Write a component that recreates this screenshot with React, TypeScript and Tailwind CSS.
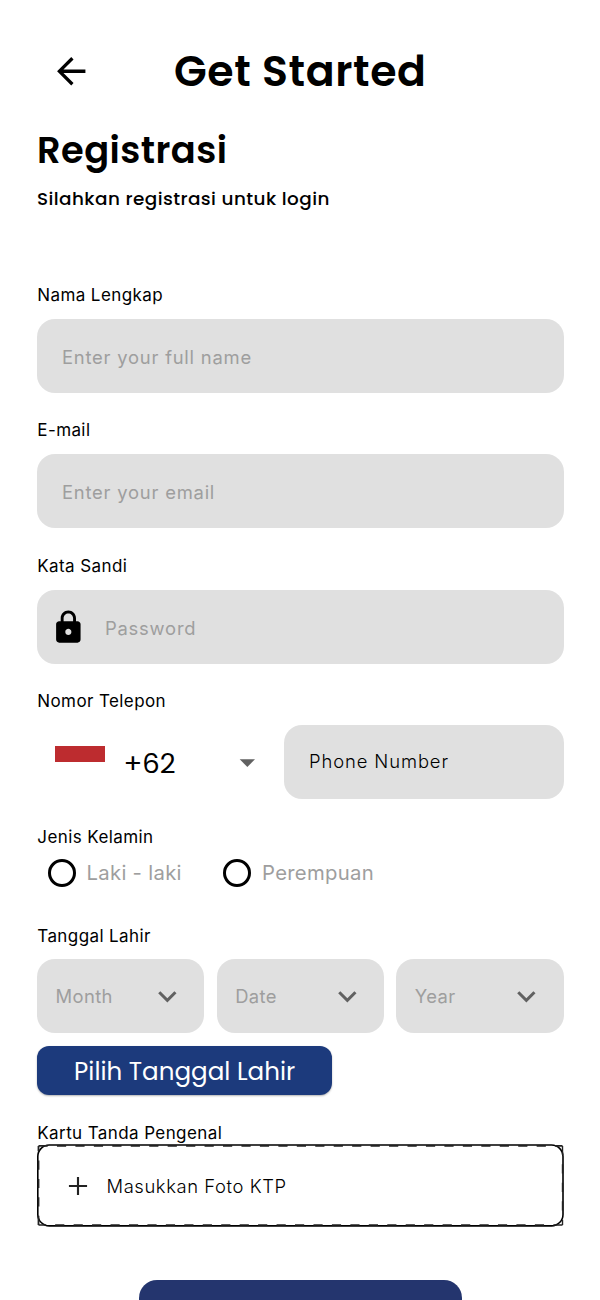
import type { ReactNode } from "react";

const chevron = "M7.41 8.59 12 13.17l4.59-4.58L18 10l-6 6-6-6 1.41-1.41z";

function Icon({ d, className }: { d: string; className: string }) {
  return (
    <svg viewBox="0 0 24 24" fill="currentColor" fillRule="evenodd" className={className}>
      <path d={d} />
    </svg>
  );
}

function Label({ children, className = "" }: { children: ReactNode; className?: string }) {
  return (
    <div className={`h-[25px] whitespace-nowrap pl-[0.3px] pt-[1.3px] text-[17px] leading-[25px] tracking-[0.4px] text-black ${className}`}>
      {children}
    </div>
  );
}

function Field({ label, children }: { label: string; children: ReactNode }) {
  return (
    <div className="mb-[24px]">
      <Label className="mb-[12.5px]">{label}</Label>
      <div className="flex h-[74px] items-center rounded-[18px] bg-[#e0e0e0]">{children}</div>
    </div>
  );
}

function Placeholder({ children, className = "" }: { children: ReactNode; className?: string }) {
  return (
    <span className={`whitespace-nowrap pt-[4px] text-[18.4px] font-[370] tracking-[0.78px] text-[#9e9e9e] ${className}`}>
      {children}
    </span>
  );
}

function Radio({ children, className = "" }: { children: ReactNode; className?: string }) {
  return (
    <div className={`flex items-center gap-[11px] ${className}`}>
      <span className="size-[28px] rounded-full border-3 border-black" />
      <span className="whitespace-nowrap pt-[0.5px] text-[20.3px] tracking-[0.3px] text-[#9e9e9e]">{children}</span>
    </div>
  );
}

function DateSelect({ children }: { children: ReactNode }) {
  return (
    <div className="flex h-[73.5px] flex-1 items-center justify-between rounded-[18px] bg-[#e0e0e0] pl-[18.5px] pr-[18.7px]">
      <span className="pt-[1.5px] text-[18.4px] font-[370] tracking-[0.4px] text-[#9e9e9e]">{children}</span>
      <Icon d={chevron} className="size-[36.7px] text-[#616161]" />
    </div>
  );
}

export default function App() {
  return (
    <main className="h-[1300px] w-[600px] overflow-hidden bg-white pl-[37px] pr-[36.3px] font-['Inter',sans-serif] text-black">
      <header className="flex h-[122px] items-start pt-[43px] font-['Poppins','Inter',sans-serif]">
        <Icon
          d="M20 11H7.6l5.7-5.6L12 4l-8 8 8 8 1.3-1.4L7.6 13H20v-2z"
          className="ml-[12.5px] mt-[6.7px] size-[42.5px]"
        />
        <h1 className="ml-[82px] whitespace-nowrap text-[42.6px] font-semibold leading-[56px] tracking-[0.6px]">
          Get Started
        </h1>
      </header>
      <section className="h-[159.3px] font-['Poppins','Inter',sans-serif]">
        <h2 className="h-[56px] text-[36.8px] font-semibold leading-[56px] tracking-[0.45px]">Registrasi</h2>
        <p className="mt-[7px] text-[18.4px] font-medium leading-[28px] tracking-[0.43px]">Silahkan registrasi untuk login</p>
      </section>

      <Field label="Nama Lengkap">
        <Placeholder className="pl-[25px]">Enter your full name</Placeholder>
      </Field>
      <Field label="E-mail">
        <Placeholder className="pl-[25px]">Enter your email</Placeholder>
      </Field>
      <Field label="Kata Sandi">
        <Icon
          d="M18 8h-1V6c0-2.76-2.24-5-5-5S7 3.24 7 6v2H6c-1.1 0-2 .9-2 2v10c0 1.1.9 2 2 2h12c1.1 0 2-.9 2-2V10c0-1.1-.9-2-2-2zm-6 9c-1.1 0-2-.9-2-2s.9-2 2-2 2 .9 2 2-.9 2-2 2zm3.1-9H8.9V6c0-1.71 1.39-3.1 3.1-3.1s3.1 1.39 3.1 3.1v2z"
          className="ml-[12.5px] mt-[0.5px] size-[36.7px]"
        />
        <Placeholder className="pl-[18.8px]">Password</Placeholder>
      </Field>

      <Label className="mb-[12.5px]">Nomor Telepon</Label>
      <div className="mb-[24.5px] flex h-[73.5px]">
        <div className="flex flex-1 items-center pl-[18px]">
          <div className="flex h-[32.4px] w-[50px] flex-col">
            <span className="h-[16.5px] bg-[#bd2c2f]" />
          </div>
          <span className="ml-[18.5px] w-[91.5px] pt-[3px] font-['Poppins','Inter',sans-serif] text-[27.5px]">+62</span>
          <Icon d="m7 10 5 5 5-5z" className="ml-[14px] size-[36.7px] text-[#616161]" />
        </div>
        <div className="flex w-[279.7px] items-center rounded-[18px] bg-[#e0e0e0] pl-[25px]">
          <span className="pt-[0.4px] text-[18.4px] font-[350] tracking-[0.9px]">Phone Number</span>
        </div>
      </div>

      <Label>Jenis Kelamin</Label>
      <div className="flex h-[49px] items-center pl-[10.5px]">
        <Radio className="w-[175.5px]">Laki - laki</Radio>
        <Radio>Perempuan</Radio>
      </div>

      <Label className="mb-[12.2px] mt-[25px]">Tanggal Lahir</Label>
      <div className="flex gap-[12.3px]">
        <DateSelect>Month</DateSelect>
        <DateSelect>Date</DateSelect>
        <DateSelect>Year</DateSelect>
      </div>
      <button className="mt-[12.8px] flex h-[49px] w-[295.3px] items-center justify-center rounded-[12px] bg-[#1c3a7c] pt-[3.6px] font-['Poppins','Inter',sans-serif] text-[24.6px] text-white shadow-[0_1px_2px_rgba(0,0,0,0.3)]">
        Pilih Tanggal Lahir
      </button>

      <Label className="mt-[24.5px]">Kartu Tanda Pengenal</Label>
      <div className="relative flex h-[82px] items-center">
        <svg className="absolute left-0 top-0 h-[83px] w-[527px]" viewBox="0 0 527 83" fill="none">
          <rect x="0.8" y="1" width="525.2" height="80.9" rx="11.5" stroke="#000" strokeWidth="1.6" />
          <path d="M1.5 1.9H525.5" stroke="#222" strokeWidth="1.8" strokeDasharray="9.2 9.25" />
          <path d="M525.5 1.9V81" stroke="#222" strokeWidth="1.4" strokeDasharray="9.2 9.25" />
          <path d="M525.5 81H1.5" stroke="#222" strokeWidth="1.6" strokeDasharray="9.2 9.25" />
          <path d="M1.5 81V1.9" stroke="#222" strokeWidth="1.8" strokeDasharray="9.2 9.25" />
        </svg>
        <Icon d="M18.8 12.8h-6v6h-1.6v-6h-6v-1.6h6v-6h1.6v6h6v1.6z" className="ml-[25px] mt-px size-[32px] text-[#222]" />
        <span className="ml-[12.5px] pt-[3px] text-[18.4px] font-[350] tracking-[0.59px]">Masukkan Foto KTP</span>
      </div>

      <button className="mx-auto mt-[53.7px] block h-[74px] w-[323.5px] rounded-[18px] bg-[#24356e]" />
    </main>
  );
}
